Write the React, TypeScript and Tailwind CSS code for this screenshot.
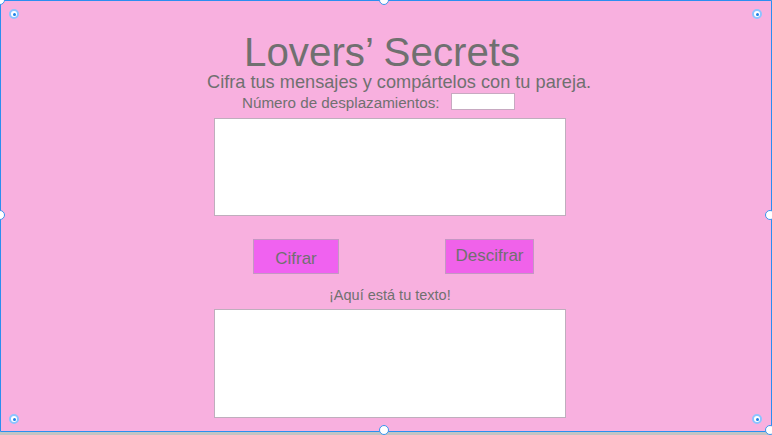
import React from 'react';

const Dot = ({ className }: { className: string }) => (
  <div className={`absolute w-[10px] h-[10px] rounded-full bg-white border-2 border-[#8cc4ff] flex items-center justify-center ${className}`}>
    <div className="w-[3px] h-[3px] rounded-full bg-[#1f7fe6]" />
  </div>
);

const Knob = ({ className }: { className: string }) => (
  <div className={`absolute w-[10px] h-[10px] rounded-full bg-white border-[1.5px] border-[#3a94ee] ${className}`} />
);

export default function App() {
  return (
    <div className="w-[772px] h-[435px] bg-[#c4c4c4] overflow-hidden" style={{ fontFamily: '"Liberation Sans", Arial, sans-serif' }}>
      <div className="relative w-[772px] h-[432px] bg-[#f8b0df] border border-[#2b8ef0] rounded-tl-[3px] text-[#707070]">
        <div className="flex flex-col items-start">
          {/* Title */}
          <h1 className="mt-[32px] ml-[243px] text-[40.3px] leading-[40px] whitespace-nowrap">Lovers’ Secrets</h1>
          <p className="ml-[206px] text-[18.2px] leading-[18px] whitespace-nowrap">
            Cifra tus mensajes y compártelos con tu pareja.
          </p>

          {/* Shift row */}
          <div className="mt-[2px] ml-[241px] flex items-end gap-[11px]">
            <span className="text-[15.2px] leading-[15px] whitespace-nowrap">Número de desplazamientos:</span>
            <input className="w-[64px] h-[17px] bg-white border border-[#c7a9c1] outline-none" />
          </div>

          {/* Input text */}
          <textarea className="mt-[8px] ml-[213px] w-[352px] h-[98px] bg-white border border-[#bfaebd] resize-none outline-none" />

          {/* Buttons */}
          <div className="mt-[23px] ml-[252px] flex items-start gap-[106px]">
            <button className="w-[86px] h-[35px] bg-[#f062f0] border border-[#c596c4] text-[17px] leading-[17px] pt-[10px] flex justify-center">
              Cifrar
            </button>
            <button className="w-[89px] h-[35px] bg-[#f062ea] border border-[#c596c4] text-[17px] leading-[17px] pt-[7px] flex justify-center">
              Descifrar
            </button>
          </div>

          <p className="mt-[13px] ml-[328px] text-[14.5px] leading-[17px] whitespace-nowrap">¡Aquí está tu texto!</p>

          {/* Output text */}
          <textarea className="mt-[5px] ml-[213px] w-[352px] h-[109px] bg-white border border-[#bfaebd] resize-none outline-none" />
        </div>

        {/* selection handles */}
        <Dot className="left-[8px] top-[8px]" />
        <Dot className="left-[751px] top-[8px]" />
        <Dot className="left-[8px] top-[413px]" />
        <Dot className="left-[751px] top-[413px]" />
        <Knob className="left-[378px] top-[-6px]" />
        <Knob className="left-[378px] top-[424px]" />
        <Knob className="left-[-6px] top-[209px]" />
        <Knob className="left-[764px] top-[209px]" />
        <Knob className="left-[-6px] top-[-6px]" />
        <Knob className="left-[764px] top-[424px]" />
      </div>
    </div>
  );
}
